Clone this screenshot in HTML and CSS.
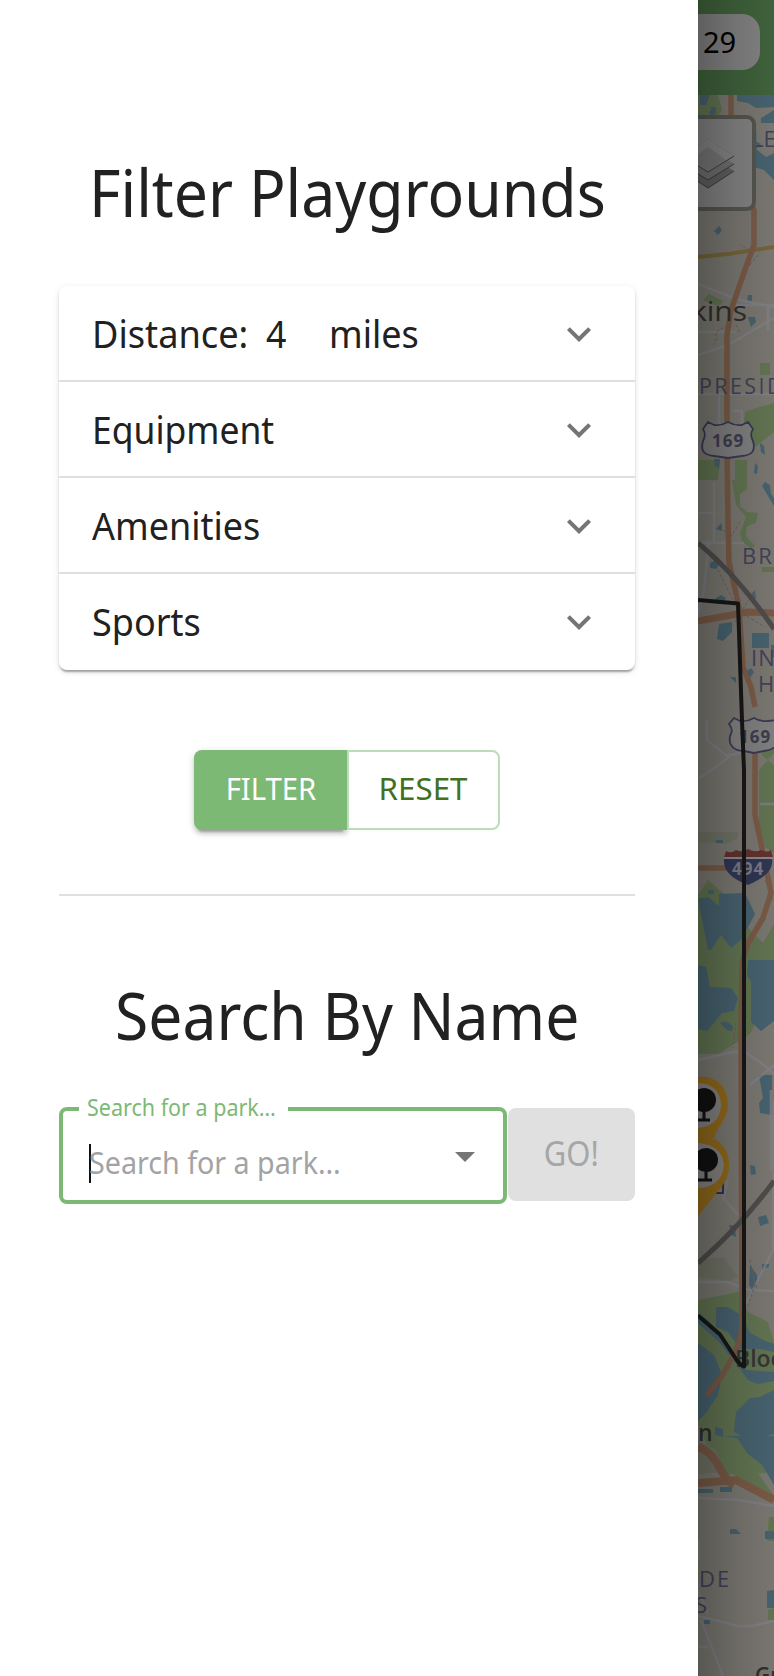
FILE: index.html
```html
<!DOCTYPE html>
<html lang="en">
<head>
<meta charset="utf-8">
<title>Filter Playgrounds</title>
<link rel="stylesheet" href="styles.css">
</head>
<body>
<div class="app">
  <main class="drawer">
    <h1 class="title"><span class="fit fit-filter">Filter Playgrounds</span></h1>
    <section class="accordion">
      <div class="row"><span class="row-label"><span class="fit fit-distance">Distance:</span><span class="fit miles-value">4</span><span class="fit fit-miles">miles</span></span><svg class="chevron" viewBox="0 0 24 24"><path d="M16.59 8.59 12 13.17 7.41 8.59 6 10l6 6 6-6z"/></svg></div>
      <div class="row"><span class="row-label"><span class="fit fit-equipment">Equipment</span></span><svg class="chevron" viewBox="0 0 24 24"><path d="M16.59 8.59 12 13.17 7.41 8.59 6 10l6 6 6-6z"/></svg></div>
      <div class="row"><span class="row-label"><span class="fit fit-amenities">Amenities</span></span><svg class="chevron" viewBox="0 0 24 24"><path d="M16.59 8.59 12 13.17 7.41 8.59 6 10l6 6 6-6z"/></svg></div>
      <div class="row"><span class="row-label"><span class="fit fit-sports">Sports</span></span><svg class="chevron" viewBox="0 0 24 24"><path d="M16.59 8.59 12 13.17 7.41 8.59 6 10l6 6 6-6z"/></svg></div>
    </section>
    <div class="buttons">
      <button class="btn primary"><span class="fit center fit-btn">FILTER</span></button>
      <button class="btn outlined"><span class="fit center fit-reset">RESET</span></button>
    </div>
    <hr class="divider">
    <h1 class="title second"><span class="fit fit-search">Search By Name</span></h1>
    <div class="search">
      <div class="field">
        <label class="field-label"><span class="fit fit-label">Search for a park…</span></label>
        <div class="placeholder"><span class="fit fit-placeholder">Search for a park…</span></div>
        <svg class="arrow" viewBox="0 0 20 10"><path d="M0 0h20L10 10z"/></svg>
      </div>
      <button class="go"><span class="fit center fit-go">GO!</span></button>
    </div>
  </main>
  <aside class="backdrop">
    <header class="bar"><div class="count">29</div></header>
    <svg class="map" viewBox="698 95 76 1581">
      <rect x="698" y="95" width="76" height="1581" fill="#7b7872"/>
      <!-- parks -->
      <g fill="#627552">
        <path d="M703 300l6-6 14 7-4 5zM698 95h20l4 15-10 20-14-3zM760 363h10v12h-10zM745 412l14-5 15-4v29l-15 12-8 6-8-14zM698 460h22l-2 20h-20zM735 460h12v20h-12zM732 480h15v9l-7 5v12l7 6 11 1-2 10-9 3-1 10 9 10-4 3-9-8-2-8 6-16-10-12zM762 567h12v5h-12zM774 753v100l-9-6-6-20V770zM698 895l10-15 15 13 20 30 20 20 11-19v60l-24 50-32 20-20 0zM698 1300l40-8 10 20 20 10 6 20v130l-20 2-35 0-21-50zM712 1436h20l42 60-15-4-35-24zM769 1517h5v24h-7zM768 1610l6-2v12h-6zM774 725l-12 15 0 15 12 10z"/>
      </g>
      <path d="M698 1260l25-3 15 20-10 4-30-4zM698 1440l18 10 10 22-28 2zM698 832h40v6l-12 6-28-2z" fill="#717366"/>
      <!-- water -->
      <g fill="#476370">
        <path d="M737 95h37v12l-18 1-8-5-11-2zM700 95l10 0-4 10-6 0zM711 107h5v7h-5zM709 112l4-4 2 6-3 3zM761 118l13-8v13h-13zM755 141l6 3-5 5 10 8 8-4v27l-10-10-10-3 2-10-5-8 6-4zM714 231l5-5 3 4-4 5zM748 295h4v7l-5-1zM748 317h7l1 5-5 5zM760 443l4 3 1 9-4-3zM755 463l3 3-1 8-3-1zM714 459h6l-1 9-4-2zM765 482l5 3 1 9 3 4v8l-9-15-3-5zM716 529l5-6 1 8zM710 563l6-3 3 5-3 4-6-1zM715 599l6-4 5 3-3 5-7 1zM719 624l13-2 0 10-9 9-6-2zM752 633h17v15h-17zM747 671l4-3 3 4-4 6-4 3zM730 677h6l0 6zM751 594l4-3 1 7-3 5zM771 645h3v12h-3zM698 899l10-2 11 9 0-12 26-1 10 21-14 26-10 8-10-13-10 15-3 0z"/>
        <path d="M698 965l8 2 4 20 21 1 7 10-4 13-12 2-15 18-9-2zM748 960h26v61l-13 10-10-9v-41l-4-5zM720 1023l6-2 7 5-1 5-5-1zM759 1075h13v40l-12-2-1-10 4-5zM750 1165l5 1 1 8-5 1zM758 1217l8-2 3 8-9 3zM729 1225l6 0 1 12-5-2zM762 1264h7v3l-7 2zM750 1265l7 10 0 12-5 3-3-5zM716 1307l12 0 16 10 5 15 14 8 11 4v8l-14-3-20 0-12-17-12-5zM698 1313l10 7 14 17 15 21 9 12 13 1 15 1v9l-16 3-10-4-10-14-20-25-20-18zM698 1343l16 12 8 20-4 20-12 18-8 8zM774 1390v44l-25 6-15-8 2-20 14-14 10-1zM724 1436l50 0v49l-12-20-15-12-10-15z"/>
        <path d="M698 1489h15v4h-15zM720 1487h12v5h-12zM730 1529h6l5 5h-11zM765 1531h9v8h-9zM767 1591l7-1v18h-7zM704 1620h6v4h-6zM715 1427l8 2 0 8-8-2zM716 840h7v3h-7zM708 890h6v4h-6z"/>
      </g>
      <!-- minor roads -->
      <g fill="none" stroke="#828187" stroke-width="2.5" opacity=".8">
        <path d="M698 284l38 15 38 8M698 355l30-10 46-27M698 332h38M736 305h38M768 305v25M719 396v45M698 394h76M734 411h8v25M714 482v60M698 513h18M698 543h46M709 540l-5 50-6 25M707 720v20l20 16 16-4M698 779l18-12 14-11M760 804h14M698 1060l35-8h12l15 10 14 12M750 1085l24-20M771 1090v80M725 1200l16 18 2 70M698 1282h30l20 8 26 1M728 1180l-5 20M774 1100l-1 150-30 60M698 1498l40 2 36 6M699 1540v20M698 1616l40 10 14 0 22-5M701 1620l22 56M698 1647h10M698 1590l10 25M741 960v70"/>
      </g>
      <!-- highways -->
      <path d="M698 257l30-3 46-7" fill="none" stroke="#76653a" stroke-width="4"/>
      <g fill="none" stroke="#7a5a46" stroke-width="5.500">
        <path d="M731 95v55l23 60 0 35-8 22-15 43-4 25v115l1 70 1 42 10 45 4 60 8 20 4 20"/>
        <path d="M755 740v75l8 38 8 40-8 25-16 27-5 18-1 75 1 285c0 15-5 25-10 35l-10 18-15 19"/>
        <path d="M698 868h33"/>
        <path d="M698 1447c22 7 22 32 36 38M698 1483l38-3 38 20" stroke-width="8"/>
        <path d="M698 621l50-9 26 1" stroke-width="7"/>
      </g>
      <g fill="none" stroke="#755d50" stroke-width="1" stroke-dasharray="3 2"><path d="M718 570l15 30 12 15 20 12M755 590l-22 35M721 525l8 15 12-20M728 325l-12 7v8l-2 5M736 325l4 7M750 250l-10-5M750 265l10-12M736 1022l-3 26M750 1260l5 25-8 23M765 880l8 20M745 1180v20"/></g>
      <!-- place names -->
      <g font-family="Open Sans, sans-serif" fill="#424257" font-size="22" font-weight="500">
        <text x="752" y="147">LE</text><text x="699" y="394" letter-spacing="2.4" font-size="21.500">PRESID</text><text x="742" y="564" letter-spacing="2">BR</text><text x="751" y="666" letter-spacing="1">IN</text><text x="758" y="692">H</text>
        <text x="699" y="1587" letter-spacing="2">DE</text><text x="695" y="1613">S</text>
      </g>
      <g font-family="Open Sans, sans-serif" fill="#302f2c" font-weight="600">
        <text x="691" y="321" font-size="27" font-weight="500" textLength="56" lengthAdjust="spacingAndGlyphs">kins</text><text x="735" y="1367" font-size="23" fill="#363537">Bloom</text><text x="698" y="1441" font-size="23">n</text><text x="755" y="1683" font-size="21">Gr</text>
      </g>
      <!-- route shields -->
      <g fill="#818080" stroke="#3a3a55" stroke-width="1.8">
        <path d="M708 422l6 3q7 1 14-3 7 4 14 3l6-3 5 7c-3 5-2 8 0 12 3 11-2 14-11 15l-7 1-7 1-7-1-7-1c-9-1-14-4-11-15 2-4 3-7 0-12z"/>
        <path d="M734 718l6 3q7 1 14-3 7 4 14 3l9-1v25q-4 5-13 6l-10 2-10-2c-8 0-16-4-14-15 2-4 3-7-1-12z"/>
      </g>
      <g font-family="Open Sans, sans-serif" font-weight="700" font-size="17" fill="#3d3d4e" letter-spacing="1"><text x="712" y="447">169</text><text x="739" y="743">169</text></g>
      <path d="M726 851q5 3 10-1 6 3 12-1 7 4 13 1 6 3 10 0l2 7h-49z" fill="#63322f"/><path d="M724 859h48c2 12-10 20-24 26-16-6-25-14-24-26z" fill="#303755"/><path d="M724 858h49" stroke="#8a888b" stroke-width="2"/>
      <text x="732" y="875" font-family="Open Sans, sans-serif" font-weight="700" font-size="17" fill="#7c7a85" letter-spacing="1">494</text>
      <!-- search radius -->
      <path d="M698 543q40 33 76 86M774 1181q-33 45-76 82" fill="none" stroke="#4e4d4b" stroke-width="5"/>
      <!-- markers -->
      <path d="M698 1077c18-2 30 10 30 28 0 13-9 19-14 33h-16z" fill="#926a1c"/><path d="M698 1083q22 1 23 22-1 21-23 23z" fill="#858380"/>
      <circle cx="704" cy="1100" r="12" fill="#111"/><path d="M704 1110v11M698 1120h12" stroke="#111" stroke-width="3"/>
      <path d="M723 1178v15h-20" stroke="#33334c" stroke-width="2" fill="none"/>
      <path d="M698 1137c20-3 32 12 31 30-1 18-14 25-31 50z" fill="#926a1c"/><path d="M698 1143q24 2 26 22-2 22-26 23z" fill="#858380"/>
      <circle cx="706" cy="1160" r="12" fill="#111"/><path d="M706 1170v11M698 1180h14" stroke="#111" stroke-width="3"/>
      <!-- boundary -->
      <path d="M698 600l40 3.500 4 117 2 50v596q-3-1-7-6l-17-26-22-19" fill="none" stroke="#171717" stroke-width="4" stroke-linejoin="round"/>
      <!-- layers control -->
      <rect x="670" y="117" width="84" height="92" rx="7" fill="#838383" stroke="#555650" stroke-width="4"/>
      <path d="M708 155l26 16-26 17-26-17z" fill="#606060"/><path d="M682 171l26 17 26-17" fill="none" stroke="#3d3d3d"/>
      <path d="M708 147l26 17-26 16-26-16z" fill="#707070"/><path d="M682 164l26 16 26-16" fill="none" stroke="#3d3d3d"/>
      <path d="M708 139l26 17-26 16-26-16z" fill="#858585" stroke="#777" stroke-width=".5"/><path d="M682 156l26 16 26-16" fill="none" stroke="#3d3d3d"/><path d="M708 147l18 13-18 11-18-11z" fill="#777"/>
    </svg>
    <div class="shade"></div>
  </aside>
</div>
</body>
</html>
```
FILE: styles.css
```css
*{box-sizing:border-box}
body{margin:0;background:#fff;font-family:"Noto Sans","Open Sans",sans-serif;color:#212121}
.app{display:flex;width:774px;height:1676px;overflow:hidden}
.drawer{width:698px;padding:149px 63px 0 59px;background:#fff}
.fit{display:inline-block;white-space:nowrap;transform-origin:0 50%}
.center{transform-origin:50% 50%}
.title{height:84px;margin:0 0 53px;padding-left:30px;font-size:66px;font-weight:400;line-height:84px}
.fit-filter{transform:scaleX(.92)}
.accordion{height:384px;border-radius:8px;box-shadow:0 4px 2px -2px rgba(0,0,0,.2),0 2px 2px rgba(0,0,0,.14),0 2px 6px rgba(0,0,0,.12)}
.row{display:flex;align-items:center;justify-content:space-between;height:96px;padding:2px 32px 0 33px;border-bottom:2px solid #dedede}
.row:last-child{border-bottom:0;padding-top:0}
.row-label{display:flex;font-size:37.5px;line-height:54px}
.fit-distance{width:174px;transform:scaleX(.965)}
.miles-value{width:63px;transform:scaleX(.95)}
.fit-miles{transform:scaleX(.96)}
.fit-equipment{transform:scaleX(.945)}
.fit-amenities{transform:scaleX(.96)}
.fit-sports{transform:scaleX(.96)}
.chevron{width:48px;height:48px;fill:#757575}
.buttons{display:flex;width:306px;height:80px;margin:80px 0 0 135px}
.btn{height:80px;width:153px;padding:0 0 4px;font:400 31px/44px "Noto Sans",sans-serif;text-align:center}
.primary{background:#7cb974;color:#fff;border:0;border-radius:8px 0 0 8px;box-shadow:0 6px 2px -4px rgba(0,0,0,.2),0 4px 4px rgba(0,0,0,.14),0 2px 10px rgba(0,0,0,.12)}
.outlined{position:relative;background:#fff;color:#43701f;border:2px solid #bddcb9;border-radius:0 8px 8px 0}
.fit-btn{transform:scaleX(.945)}
.fit-reset{transform:scaleX(1.01)}
.divider{height:2px;margin:64px 0 76px;border:0;background:#e0e0e0}
.second{padding-left:56px;margin-bottom:51px}
.fit-search{transform:scaleX(.918)}
.search{display:flex;gap:1px}
.field{position:relative;width:448px;height:97px;border:4px solid #7cb974;border-radius:8px}
.field-label{position:absolute;left:16px;top:-20px;width:209px;height:32px;padding-left:8px;background:#fff;color:#7cb974;font-size:23px;line-height:32px}
.fit-label{transform:scaleX(.935)}
.placeholder{margin:33px 0 0 26px;height:39px;border-left:2px solid #111;color:#a3a3a3;font-size:30px;line-height:37px}
.fit-placeholder{margin-left:-2px;transform:scaleX(.955)}
.arrow{position:absolute;left:392px;top:41px;width:20px;height:10px;fill:#757575}
.go{width:127px;height:93px;margin-top:1px;padding:0 0 4px;border:0;border-radius:8px;background:#e0e0e0;color:#a6a6a6;font:400 34px/48px "Noto Sans",sans-serif}
.fit-go{transform:scaleX(.91)}
.backdrop{position:relative;width:76px;height:1676px;overflow:hidden;background:#7b7872}
.bar{height:95px;padding-top:14px;background:#40633c}
.count{width:62px;height:56px;padding-left:5px;border-radius:0 18px 18px 0;background:#838383;color:#000;font-size:29px;line-height:55px}
.map{display:block;width:76px;height:1581px}
.shade{position:absolute;inset:0;background:linear-gradient(90deg,rgba(0,0,0,.28),rgba(0,0,0,.12) 50%,rgba(0,0,0,.02))}
```
